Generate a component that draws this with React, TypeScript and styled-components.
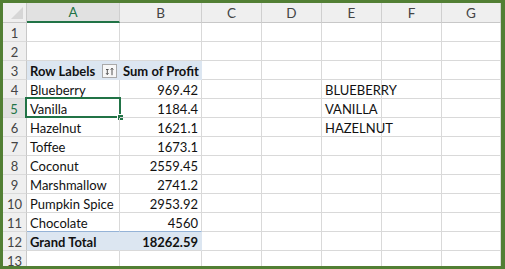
import styled, { createGlobalStyle, css } from "styled-components";

const GlobalStyle = createGlobalStyle`
  html, body {
    margin: 0;
    padding: 0;
    background: #ffffff;
  }
  * {
    box-sizing: border-box;
  }
`;

const columns = ["A", "B", "C", "D", "E", "F", "G"];
const colWidths = [93, 82, 60, 60, 60, 60, 59];

type rowType = {
  label?: string;
  value?: string;
  extra?: string;
  kind?: "head" | "total";
};

// rows 1..13 (1 and 2 empty)
const rows: rowType[] = [
  {},
  {},
  { label: "Row Labels", value: "Sum of Profit", kind: "head" },
  { label: "Blueberry", value: "969.42", extra: "BLUEBERRY" },
  { label: "Vanilla", value: "1184.4", extra: "VANILLA" },
  { label: "Hazelnut", value: "1621.1", extra: "HAZELNUT" },
  { label: "Toffee", value: "1673.1" },
  { label: "Coconut", value: "2559.45" },
  { label: "Marshmallow", value: "2741.2" },
  { label: "Pumpkin Spice", value: "2953.92" },
  { label: "Chocolate", value: "4560" },
  { label: "Grand Total", value: "18262.59", kind: "total" },
  {},
];

const selectedRow = 5;

const SortIcon = () => (
  <svg width="10" height="9" viewBox="0 0 10 9">
    <path d="M1 2.5h2.6M2.3 2.5v5M1.1 6.2l1.2 1.4 1.2-1.4" stroke="#555" strokeWidth="1" fill="none" />
    <path d="M7 1.2v7M5.7 2.7L7 1.2l1.3 1.5" stroke="#555" strokeWidth="1" fill="none" />
  </svg>
);

export default function App() {
  return (
    <>
      <GlobalStyle />
      <SFrame>
        <SGrid>
          <SCorner>
            <STriangle />
          </SCorner>
          {columns.map((c, i) => (
            <SColHead key={c} $active={i === 0}>
              {c}
            </SColHead>
          ))}
          {rows.map((r, idx) => {
            const n = idx + 1;
            const pivot = r.kind === "head" || r.kind === "total";
            return [
              <SRowHead key={`h${n}`} $active={n === selectedRow} $last={n === 13}>
                {n}
              </SRowHead>,
              <SCell key={`a${n}`} $kind={r.kind}>
                {r.label && <SText $bold={pivot}>{r.label}</SText>}
                {r.kind === "head" && (
                  <SFilterBtn>
                    <SortIcon />
                  </SFilterBtn>
                )}
                {n === selectedRow && (
                  <SSelection>
                    <SHandle />
                  </SSelection>
                )}
              </SCell>,
              <SCell key={`b${n}`} $kind={r.kind} $right={r.kind !== "head"}>
                {r.value && <SText $bold={pivot}>{r.value}</SText>}
              </SCell>,
              ...[2, 3, 4, 5, 6].map((ci) => (
                <SCell key={`${ci}-${n}`}>
                  {ci === 4 && r.extra && <SText>{r.extra}</SText>}
                </SCell>
              )),
            ];
          })}
        </SGrid>
      </SFrame>
    </>
  );
}

const SFrame = styled.div`
  width: 505px;
  height: 269px;
  overflow: hidden;
  border-style: solid;
  border-color: #527f34;
  border-width: 3px 4px 3px 3px;
  background: #ffffff;
  font-family: Lato, "Liberation Sans", sans-serif;
`;

const SGrid = styled.div`
  display: grid;
  grid-template-columns: 24px ${colWidths.map((w) => `${w}px`).join(" ")};
  grid-template-rows: 20px repeat(13, 19px);
`;

const SCorner = styled.div`
  position: relative;
  background: #efefef;
  border-right: 1px solid #c8c8c8;
  border-bottom: 1px solid #c8c8c8;
`;

const STriangle = styled.div`
  position: absolute;
  right: 3px;
  bottom: 3px;
  width: 0;
  height: 0;
  border-left: 12px solid transparent;
  border-bottom: 12px solid #d6d6d6;
`;

const SColHead = styled.div<{ $active?: boolean }>`
  display: flex;
  align-items: center;
  justify-content: center;
  font-size: 13.5px;
  color: #444444;
  background: #efefef;
  border-right: 1px solid #cfcfcf;
  border-bottom: 1px solid #c8c8c8;
  ${({ $active }) =>
    $active &&
    css`
      background: #e1e1e1;
      color: #217346;
      border-bottom: 2px solid #217346;
    `}
`;

const SRowHead = styled.div<{ $active?: boolean; $last?: boolean }>`
  display: flex;
  align-items: center;
  justify-content: center;
  padding-top: 1px;
  font-size: 13px;
  color: #444444;
  background: #efefef;
  border-right: 1px solid #c8c8c8;
  border-bottom: 1px solid #dadada;
  ${({ $active }) =>
    $active &&
    css`
      background: #e1e1e1;
      color: #217346;
      border-right: 2px solid #217346;
    `}
`;

const SCell = styled.div<{ $kind?: "head" | "total"; $right?: boolean }>`
  position: relative;
  display: flex;
  align-items: center;
  justify-content: ${({ $right }) => ($right ? "flex-end" : "flex-start")};
  padding: 1px 3px 0 3px;
  font-size: 13px;
  color: #111111;
  white-space: nowrap;
  border-right: 1px solid #d9d9d9;
  border-bottom: 1px solid #d9d9d9;
  ${({ $kind }) =>
    $kind === "head" &&
    css`
      background: #dce6f1;
      border-right-color: #dce6f1;
      border-bottom-color: #dce6f1;
    `}
  ${({ $kind }) =>
    $kind === "total" &&
    css`
      background: #dce6f1;
      border-top: 1px solid #95b3d7;
      border-right-color: #dce6f1;
      margin-top: -1px;
    `}
`;

const SText = styled.span<{ $bold?: boolean }>`
  font-weight: ${({ $bold }) => ($bold ? 700 : 400)};
  line-height: 16px;
`;

const SFilterBtn = styled.div`
  position: absolute;
  right: 2px;
  top: 3px;
  width: 15px;
  height: 14px;
  display: flex;
  align-items: center;
  justify-content: center;
  background: #f7f7f7;
  border: 1px solid #a9a9a9;
`;

const SSelection = styled.div`
  position: absolute;
  left: -2px;
  top: -2px;
  right: -2px;
  bottom: -1px;
  border: 2px solid #217346;
  pointer-events: none;
`;

const SHandle = styled.div`
  position: absolute;
  right: -5px;
  bottom: -5px;
  width: 7px;
  height: 7px;
  background: #217346;
  border: 1px solid #ffffff;
`;
